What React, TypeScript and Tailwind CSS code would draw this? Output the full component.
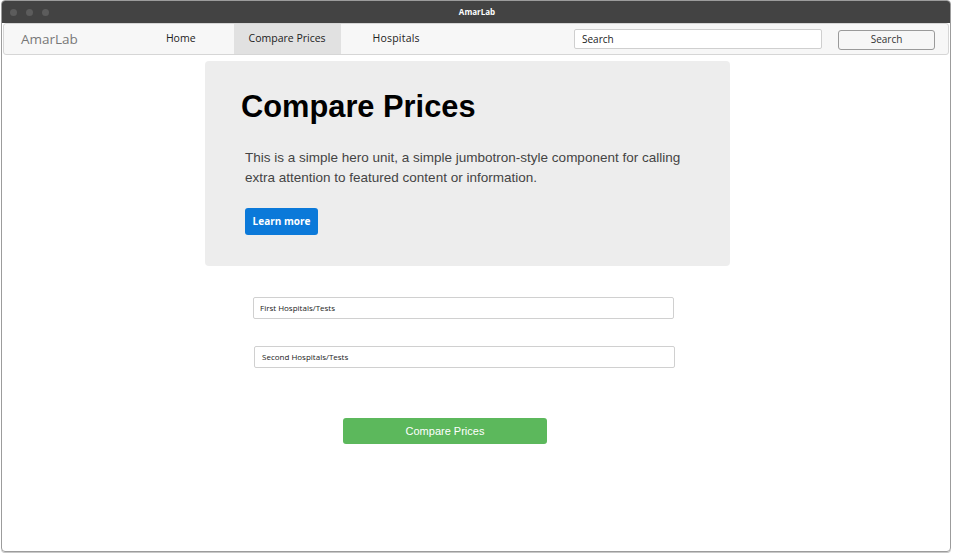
export default function App() {
  return (
    <div className="w-[954px] h-[555px] bg-white pl-[1px] font-['Liberation_Sans',Arial,sans-serif]">
      <div className="w-[950px] h-[552px] border border-[#9c9c9c] rounded-[4px] shadow-[0_1px_0_#c8c8c8] overflow-hidden flex flex-col">
        {/* Title bar */}
        <div className="relative h-[22px] bg-[#434343] flex items-center shrink-0">
          <div className="flex gap-[9px] pl-[8px]">
            <span className="w-[7px] h-[7px] rounded-full bg-[#5c5c5c]" />
            <span className="w-[7px] h-[7px] rounded-full bg-[#5c5c5c]" />
            <span className="w-[7px] h-[7px] rounded-full bg-[#5c5c5c]" />
          </div>
          <div className="absolute inset-0 flex items-center justify-center pl-[2px] text-[8px] font-bold text-white font-['Open_Sans',sans-serif]">
            AmarLab
          </div>
        </div>

        {/* Navbar */}
        <div className="mx-[1px] h-[32px] bg-[#f7f7f7] border border-[#d6d6d6] rounded-[3px] flex items-stretch font-['Open_Sans',sans-serif] text-[10.5px] text-[#222] shrink-0">
          <div className="flex items-center pl-[17px] text-[13.5px] text-[#777]">AmarLab</div>
          <div className="flex items-center ml-[88px]">Home</div>
          <div className="flex items-center ml-[38px] px-[15px] bg-[#e1e1e1]">Compare Prices</div>
          <div className="flex items-center ml-[32px] tracking-[0.2px]">Hospitals</div>
          <div className="ml-auto flex items-center">
            <div className="w-[248px] h-[20px] border border-[#cfcfcf] rounded-[2px] bg-white flex items-center pl-[7px] text-[10px]">
              Search
            </div>
            <div className="ml-[16px] mr-[13px] w-[97px] h-[20px] border border-[#9a9a9a] rounded-[3px] bg-[#f6f6f6] flex items-center justify-center text-[10px] text-[#333] mt-[1px]">
              Search
            </div>
          </div>
        </div>

        {/* Hero */}
        <div className="ml-[203px] mt-[6px] w-[525px] h-[205px] bg-[#ededed] rounded-[4px] pl-[36px] pt-[28px]">
          <h1 className="text-[30.8px] font-bold text-black leading-[36px]">Compare Prices</h1>
          <p className="mt-[23px] pl-[4px] text-[13.5px] leading-[20px] text-[#444] w-[465px]">
            This is a simple hero unit, a simple jumbotron-style component for calling extra attention to featured
            content or information.
          </p>
          <div className="mt-[20px] ml-[4px] w-[73px] h-[27px] bg-[#0b79d9] rounded-[3px] flex items-center justify-center text-[10px] font-bold text-white font-['Open_Sans',sans-serif]">
            Learn more
          </div>
        </div>

        {/* Inputs */}
        <div className="ml-[251px] mt-[31px] w-[421px] h-[22px] border border-[#d0d0d0] rounded-[2px] flex items-center pl-[6px] text-[8px] text-[#222] font-['Open_Sans',sans-serif]">
          First Hospitals/Tests
        </div>
        <div className="ml-[252px] mt-[27px] w-[421px] h-[22px] border border-[#d0d0d0] rounded-[2px] flex items-center pl-[7px] text-[8px] text-[#222] font-['Open_Sans',sans-serif]">
          Second Hospitals/Tests
        </div>

        <div className="ml-[341px] mt-[50px] w-[204px] h-[26px] bg-[#5cb85c] rounded-[3px] flex items-center justify-center text-[11px] text-white">
          Compare Prices
        </div>
      </div>
    </div>
  );
}
